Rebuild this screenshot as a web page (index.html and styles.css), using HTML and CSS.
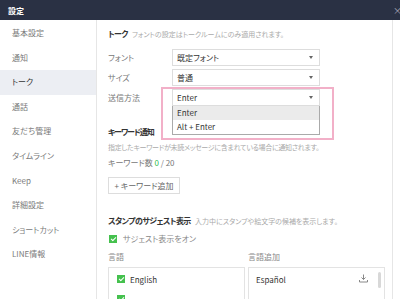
FILE: index.html
```
<!DOCTYPE html>
<html lang="ja">
<head>
    <meta charset="UTF-8">
    <title>設定</title>
    <link rel="stylesheet" href="styles.css">
</head>
<body>
    <div class="window">
        <header class="titlebar">
            <span class="title">設定</span>
            <span class="close">×</span>
        </header>
        <div class="main">
            <nav class="sidebar">
                <div class="nav-item">基本設定</div>
                <div class="nav-item">通知</div>
                <div class="nav-item active">トーク</div>
                <div class="nav-item">通話</div>
                <div class="nav-item">友だち管理</div>
                <div class="nav-item">タイムライン</div>
                <div class="nav-item">Keep</div>
                <div class="nav-item">詳細設定</div>
                <div class="nav-item">ショートカット</div>
                <div class="nav-item">LINE情報</div>
            </nav>
            <section class="content">
                <div class="section-title">トーク <span class="hint">フォントの設定はトークルームにのみ適用されます。</span></div>
                <div class="form-row">
                    <span class="label">フォント</span>
                    <div class="select">既定フォント<span class="caret"></span></div>
                </div>
                <div class="form-row">
                    <span class="label">サイズ</span>
                    <div class="select">普通<span class="caret"></span></div>
                </div>
                <div class="form-row">
                    <span class="label">送信方法</span>
                    <div class="select open">Enter<span class="caret"></span>
                        <div class="highlight"></div>
                        <ul class="dropdown">
                            <li class="selected">Enter</li>
                            <li>Alt + Enter</li>
                        </ul>
                    </div>
                </div>

                <div class="section-title spaced tight">キーワード通知</div>
                <div class="hint-line">指定したキーワードが未読メッセージに含まれている場合に通知されます。</div>
                <div class="count">キーワード数 <span class="green">0</span> / 20</div>
                <button class="add-button">+ キーワード追加</button>

                <div class="section-title spaced">スタンプのサジェスト表示 <span class="hint">入力中にスタンプや絵文字の候補を表示します。</span></div>
                <div class="check-row"><span class="checkbox"></span>サジェスト表示をオン</div>
                <div class="lang-grid">
                    <div class="lang-col">
                        <div class="lang-label">言語</div>
                        <div class="lang-box">
                            <div class="lang-item"><span class="checkbox"></span>English</div>
                            <div class="lang-item"><span class="checkbox"></span></div>
                        </div>
                    </div>
                    <div class="lang-col">
                        <div class="lang-label">言語追加</div>
                        <div class="lang-box">
                            <div class="lang-item add">Español
                                <svg class="download" width="9" height="9" viewBox="0 0 9 9">
                                    <path d="M4.5 0.5v5M2.5 3.5l2 2 2-2M0.5 6v2h8v-2" fill="none" stroke="#888" stroke-width="1"/>
                                </svg>
                            </div>
                            <span class="scrollbar"></span>
                        </div>
                    </div>
                </div>
            </section>
        </div>
    </div>
</body>
</html>
```

FILE: styles.css
```
body {
    margin: 0;
    font-family: "Noto Sans CJK JP", "Noto Sans", sans-serif;
    font-feature-settings: "palt";
    background: #fff;
    color: #444;
}

.window {
    width: 400px;
    height: 299px;
    overflow: hidden;
    display: flex;
    flex-direction: column;
}

.titlebar {
    height: 20px;
    flex: none;
    background: #2a3144;
    color: #fff;
    display: flex;
    align-items: center;
    justify-content: space-between;
    padding: 0 0 0 8px;
}

.title {
    font-size: 8px;
    font-weight: bold;
}

.close {
    font-size: 9px;
    color: #aab;
    margin-right: -2px;
}

.main {
    flex: 1;
    display: flex;
    min-height: 0;
}

.sidebar {
    width: 96px;
    flex: none;
    border-right: 1px solid #e6e6e6;
    padding-top: 1px;
}

.nav-item {
    height: 24.6px;
    line-height: 24.6px;
    padding-left: 12px;
    font-size: 8px;
    color: #7a7a7a;
}

.nav-item.active {
    background: #eceef3;
    color: #333;
}

.content {
    width: 284px;
    padding: 7px 0 0 11px;
    border-right: 1px solid #e6e6e6;
}

.section-title {
    font-size: 8px;
    font-weight: bold;
    line-height: 14px;
    color: #333;
    white-space: nowrap;
    letter-spacing: -0.6px;
}

.section-title.spaced {
    margin-top: 20px;
}

.section-title.tight {
    letter-spacing: -1.1px;
}

.hint {
    font-weight: normal;
    font-size: 7px;
    color: #aaa;
    margin-left: 3px;
    letter-spacing: 0;
}

.form-row {
    display: flex;
    align-items: center;
    height: 16px;
    margin-top: 4px;
}

.section-title + .form-row {
    margin-top: 8px;
}

.label {
    width: 64px;
    font-size: 8px;
    color: #777;
}

.select {
    position: relative;
    width: 142px;
    height: 15px;
    line-height: 15px;
    border: 1px solid #ddd;
    padding-left: 4px;
    font-size: 8px;
    color: #333;
}

.caret {
    position: absolute;
    right: 6px;
    top: 6px;
    width: 0;
    height: 0;
    border-left: 2.5px solid transparent;
    border-right: 2.5px solid transparent;
    border-top: 3px solid #666;
}

.highlight {
    position: absolute;
    left: -12px;
    right: -15px;
    top: -3px;
    height: 49px;
    border: 2px solid #f2b0c8;
    z-index: 2;
}

.dropdown {
    position: absolute;
    left: -1px;
    top: 16px;
    width: 142px;
    margin: 0;
    padding: 0 0 0 4px;
    list-style: none;
    background: #fff;
    border: 1px solid #aaa;
    border-top: none;
    z-index: 1;
}

.dropdown li {
    height: 14px;
    line-height: 14px;
    margin-left: -4px;
    padding-left: 4px;
}

.dropdown li.selected {
    background: #ebebeb;
}

.hint-line {
    font-size: 7px;
    color: #aaa;
    line-height: 12px;
    margin-top: 2px;
    white-space: nowrap;
    letter-spacing: -0.3px;
}

.count {
    font-size: 8px;
    color: #777;
    line-height: 12px;
    margin-top: 4px;
}

.green {
    color: #2dbd4b;
}

.add-button {
    display: block;
    margin-top: 8px;
    width: 72px;
    height: 17px;
    padding: 0;
    font-family: inherit;
    font-feature-settings: "palt";
    font-size: 8px;
    color: #666;
    background: #fff;
    border: 1px solid #ddd;
}

.check-row {
    display: flex;
    align-items: center;
    font-size: 8px;
    color: #888;
    line-height: 12px;
    margin-top: 5px;
}

.checkbox {
    position: relative;
    display: inline-block;
    width: 8px;
    height: 8px;
    background: #45c14e;
    margin: 0 6px 0 1px;
    flex: none;
}

.checkbox::after {
    content: "";
    position: absolute;
    left: 2.6px;
    top: 0.8px;
    width: 2px;
    height: 4px;
    border: solid #fff;
    border-width: 0 1.2px 1.2px 0;
    transform: rotate(45deg);
}

.lang-grid {
    display: grid;
    grid-template-columns: 137px 137px;
    gap: 3px;
    margin-top: 6px;
}

.lang-label {
    font-size: 8px;
    color: #888;
    line-height: 12px;
}

.lang-box {
    position: relative;
    margin-top: 4px;
    height: 60px;
    border: 1px solid #e3e3e3;
    padding-top: 1px;
}

.lang-item {
    display: flex;
    align-items: center;
    height: 20px;
    padding-left: 7px;
    font-size: 8px;
    color: #333;
}

.lang-item .checkbox {
    margin-right: 5px;
}

.lang-item.add {
    position: relative;
}

.download {
    position: absolute;
    right: 16px;
    top: 5px;
}

.scrollbar {
    position: absolute;
    right: 3px;
    top: 4px;
    width: 3px;
    height: 16px;
    border-radius: 2px;
    background: #d8d8d8;
}
```
